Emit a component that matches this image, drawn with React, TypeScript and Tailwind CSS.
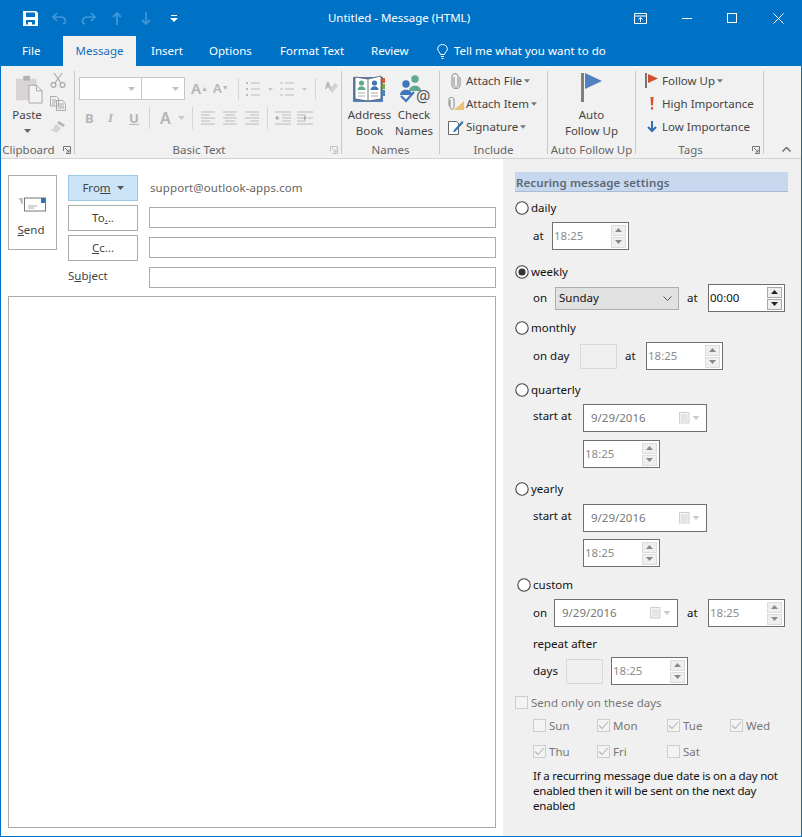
import React from 'react';

const Caret: React.FC<{ className?: string }> = ({ className = 'fill-[#6a6a6a]' }) => (
  <svg width="7" height="4" viewBox="0 0 7 4" className={className}><path d="M0 0h7L3.5 4z" /></svg>
);

const Radio: React.FC<{ checked?: boolean }> = ({ checked }) => (
  <svg width="14" height="14" viewBox="0 0 14 14" className="shrink-0">
    <circle cx="7" cy="7" r="6.2" fill="#fff" stroke="#444" strokeWidth="1.1" />
    {checked && <circle cx="7" cy="7" r="3.6" fill="#333" />}
  </svg>
);

const Check: React.FC<{ checked?: boolean }> = ({ checked }) => (
  <div className="w-[13px] h-[13px] border border-[#cdcdcd] bg-[#f3f3f3] shrink-0 flex items-center justify-center">
    {checked && (
      <svg width="11" height="11" viewBox="0 0 11 11" fill="none" stroke="#b4b4b4" strokeWidth="1.1"><path d="M1 5.5l3 3L10 2" /></svg>
    )}
  </div>
);

const Spinner: React.FC<{ value: string; active?: boolean }> = ({ value, active }) => (
  <div className="w-[77px] h-[28px] border border-[#707070] bg-white flex items-center shrink-0">
    <span className={active ? 'flex-1 pl-[1px] text-[#111]' : 'flex-1 pl-[1px] text-[#8c8c8c]'}>{value}</span>
    <div className="w-[15px] mr-[2px] flex flex-col gap-[1px]">
      {[0, 1].map((i) => (
        <div key={i} className={active ? 'h-[11px] border border-[#a8a8a8] bg-[#ececec] flex items-center justify-center' : 'h-[11px] border border-[#dcdcdc] bg-[#efefef] flex items-center justify-center'}>
          <svg width="7" height="4" viewBox="0 0 7 4" className={active ? 'fill-[#222]' : 'fill-[#8a8a8a]'}>
            <path d={i === 0 ? 'M0 4h7L3.5 0z' : 'M0 0h7L3.5 4z'} />
          </svg>
        </div>
      ))}
    </div>
  </div>
);

const DatePick: React.FC = () => (
  <div className="w-[124px] h-[28px] border border-[#707070] bg-white flex items-center shrink-0">
    <span className="flex-1 pl-[7px] text-[#777]">9/29/2016</span>
    <svg width="11" height="12" viewBox="0 0 11 12" className="mr-[2px]">
      <rect x="0.5" y="0.5" width="9.5" height="10.5" fill="#f4f4f4" stroke="#d0d0d0" />
      <path d="M2 3h7M2 5h7M2 7h7M2 9h7M3 3v6M5 3v6M7 3v6" stroke="#d8d8d8" strokeWidth="0.7" />
    </svg>
    <Caret className="fill-[#cbcbc4] mr-[6px] w-[8px]" />
  </div>
);

const Empty: React.FC = () => <div className="w-[37px] h-[25px] border border-[#d9d9d9] bg-[#f0f0f0] shrink-0" />;

const Group: React.FC<{ width: string; label: string; launcher?: boolean; dim?: boolean; children: React.ReactNode }> = ({ width, label, launcher, dim, children }) => (
  <div className={`${width} mt-[5px] h-[83px] border-r border-[#c8c8c8] flex flex-col shrink-0`}>
    <div className="flex-1 min-h-0">{children}</div>
    <div className={launcher ? 'relative h-[13px] mb-[-2px] pr-[18px] leading-[13px] text-center text-[#666] whitespace-nowrap' : 'relative h-[13px] mb-[-2px] leading-[13px] text-center text-[#666] whitespace-nowrap'}>
      {label}
      {launcher && (
        <svg width="8" height="8" viewBox="0 0 8 8" fill="none" className="absolute right-[3px] top-[3px]" stroke={dim ? '#c0c0c0' : '#777'}>
          <path d="M.5 5V.5H7.500V7.500H3M2 2l4 4M6 3.500V6H3.500" />
        </svg>
      )}
    </div>
  </div>
);

const ClipboardGroup: React.FC = () => (
  <Group width="w-[74px]" label="Clipboard" launcher>
    <div className="flex pl-[8px] pt-[1px]">
      <div className="w-[36px] flex flex-col items-center">
        <svg width="28" height="30" viewBox="0 0 30 30" className="mt-[2px] ml-[3px]">
          <path d="M1 4h7l1-3h6l1 3h7v23H1z" fill="#d8d4d4" />
          <rect x="9" y="1" width="7" height="5" fill="#b6b0b0" />
          <path d="M15 11h8l6 6v13H15z" fill="#f3f1f3" stroke="#a7a3a7" />
          <path d="M23 11v6h6" fill="none" stroke="#a7a3a7" />
        </svg>
        <span className="mt-[3px] leading-[16px] text-[#444]">Paste</span>
        <Caret className="fill-[#666] mt-[6px]" />
      </div>
      <div className="ml-[5px] flex flex-col items-center w-[16px]">
        <svg width="16" height="16" viewBox="0 0 16 16" fill="none" stroke="#aaa" strokeWidth="1.200">
          <circle cx="3.500" cy="13" r="2.400" /><circle cx="12.500" cy="13" r="2.400" />
          <path d="M5 11L12 1M11 11L4 1" />
        </svg>
        <svg width="16" height="15" viewBox="0 0 16 15" fill="none" stroke="#aaa" className="mt-[8px]">
          <path d="M.5.500h6l2 2V10H.5zM6.500 4.500h6l3 3v7h-9zM2 4h4M2 6h4M2 8h3M8 8h6M8 10h6M8 12h6" />
        </svg>
        <svg width="16" height="14" viewBox="0 0 16 14" className="mt-[9px]">
          <path d="M9 1l6 4-2 2-6-4z" fill="#b5b5b5" /><path d="M6 4l5 4-4 5-7-3 3-1z" fill="#d4d4d4" />
        </svg>
      </div>
    </div>
  </Group>
);

const Bars: React.FC<{ kind: 'l' | 'c' | 'r' | 'in' | 'out' }> = ({ kind }) => {
  const d: Record<string, string> = {
    l: 'M0 1h14M0 4h9M0 7h14M0 10h9M0 13h14',
    c: 'M0 1h14M2 4h10M0 7h14M2 10h10M0 13h14',
    r: 'M0 1h14M5 4h9M0 7h14M5 10h9M0 13h14',
    in: 'M0 1h16M7 4h9M7 7h9M7 10h9M0 13h16M0 7h5',
    out: 'M0 1h16M0 4h9M0 7h9M0 10h9M0 13h16M11 7h5',
  };
  const wide = kind === 'in' || kind === 'out';
  return (
    <svg width={wide ? 16 : 14} height="14" viewBox={wide ? '0 0 16 14' : '0 0 14 14'} fill="none" stroke="#bbb">
      <path d={d[kind]} />
      {kind === 'in' && <path d="M0 7l3-2.500v5z" fill="#aaa" stroke="none" />}
      {kind === 'out' && <path d="M16 7l-3-2.500v5z" fill="#aaa" stroke="none" transform="translate(-6)" />}
    </svg>
  );
};

const Sep: React.FC = () => <div className="w-px h-[22px] bg-[#d4d4d4] shrink-0" />;

const BasicTextGroup: React.FC = () => (
  <Group width="w-[267px]" label="Basic Text" launcher dim>
    <div className="flex flex-col text-[#b5b5b5]">
      <div className="flex items-center h-[23px] mt-[6px] pl-[4px]">
        <div className="w-[63px] h-[23px] border border-[#c6c6c6] bg-white flex items-center justify-end pr-[6px]"><Caret className="fill-[#c0c0c0]" /></div>
        <div className="w-[43px] h-[23px] border border-l-0 border-[#c6c6c6] bg-white flex items-center justify-end pr-[5px]"><Caret className="fill-[#c0c0c0]" /></div>
        <span className="ml-[6px] w-[22px] font-semibold text-[15px] leading-[15px]">A<sup className="text-[7px]">▲</sup></span>
        <span className="w-[20px] font-semibold text-[13px] leading-[15px]">A<sup className="text-[7px]">▼</sup></span>
        <div className="ml-[5px]"><Sep /></div>
        <svg width="27" height="14" viewBox="0 0 27 14" fill="none" stroke="#bbb" className="ml-[7px]">
          <path d="M5 1h9M5 7h9M5 13h9" /><path d="M0 1h2M0 7h2M0 13h2" strokeWidth="2" /><path d="M22 6h5l-2.500 3z" fill="#c8c8c8" stroke="none" />
        </svg>
        <svg width="27" height="14" viewBox="0 0 27 14" fill="none" stroke="#bbb" className="ml-[7px]">
          <path d="M5 1h9M5 7h9M5 13h9M0 1h3M0 7h3M0 13h3" /><path d="M22 6h5l-2.500 3z" fill="#c8c8c8" stroke="none" />
        </svg>
        <div className="ml-[8px]"><Sep /></div>
        <svg width="15" height="15" viewBox="0 0 15 15" className="ml-[9px]">
          <path d="M7 12l6-7-3-3-6 6z" fill="#d2d2d2" /><path d="M2 1h2l2 7H4.500L4 6.500H2L1.500 8H0z" fill="#b8b8b8" />
        </svg>
      </div>
      <div className="flex items-center h-[22px] mt-[7px] pl-[10px]">
        <span className="w-[23px] font-bold text-[13px]">B</span>
        <span className="w-[21px] italic font-bold text-[13px] font-['Liberation_Serif']">I</span>
        <span className="w-[20px] underline font-bold text-[13px]">U</span>
        <Sep />
        <span className="ml-[10px] w-[18px] font-semibold text-[16px]">A</span>
        <Caret className="fill-[#c8c8c8]" />
        <div className="ml-[7px]"><Sep /></div>
        <div className="ml-[8px] flex gap-[8px]"><Bars kind="l" /><Bars kind="c" /><Bars kind="r" /></div>
        <div className="ml-[8px]"><Sep /></div>
        <div className="ml-[7px] flex gap-[6px]"><Bars kind="in" /><Bars kind="out" /></div>
      </div>
    </div>
  </Group>
);

const NamesGroup: React.FC = () => (
  <Group width="w-[98px]" label="Names">
    <div className="flex pl-[4px] leading-[16px] text-[#444] text-center">
      <div className="w-[47px] flex flex-col items-center">
        <svg width="33" height="28" viewBox="0 0 33 28" className="mt-[4px]">
          <rect x="0" y="2" width="30" height="25" fill="#4e81bd" />
          <path d="M29 3h3v5h-3z" fill="#d5583a" /><path d="M29 9h3v5h-3z" fill="#7aa83f" /><path d="M29 15h3v6h-3z" fill="#4e81bd" />
          <path d="M2 2l13 2 13-3v23l-13 2-13-2z" fill="#fff" stroke="#555" strokeWidth="0.800" />
          <path d="M15 4v22" stroke="#777" />
          <circle cx="8.500" cy="8" r="2.600" fill="#5fa98e" /><path d="M4.500 15c0-5 8-5 8 0z" fill="#5fa98e" />
          <circle cx="21.500" cy="8" r="2.600" fill="#3f76b8" /><path d="M17.500 15c0-5 8-5 8 0z" fill="#3f76b8" />
          <path d="M5 18h7M5 21h7M18 18h7M18 21h7" stroke="#aaa" />
        </svg>
        <span className="mt-[4px]">Address</span>
        <span>Book</span>
      </div>
      <div className="w-[42px] flex flex-col items-center whitespace-nowrap">
        <div className="relative w-[31px] h-[30px] mt-[3px]">
          <svg width="31" height="30" viewBox="0 0 31 30">
            <circle cx="16" cy="5" r="3.700" fill="#5fa98e" /><path d="M10 17c0-7 12-7 12 0z" fill="#5fa98e" />
            <circle cx="7" cy="10" r="3.700" fill="#3f76b8" /><path d="M1 21c0-7 12-7 12 0z" fill="#3f76b8" />
            <path d="M2 22l5 5 8-9" fill="none" stroke="#3f76b8" strokeWidth="2.200" />
          </svg>
          <span className="absolute right-[-1px] bottom-[-2px] text-[16px] leading-[20px] text-[#555]">@</span>
        </div>
        <span className="mt-[3px]">Check</span>
        <span>Names</span>
      </div>
    </div>
  </Group>
);

const MiniAction: React.FC<{ icon: React.ReactNode; label: string; caret?: boolean }> = ({ icon, label, caret }) => (
  <div className="h-[23px] flex items-center text-[#444] whitespace-nowrap">
    <div className="w-[17px] flex justify-center shrink-0">{icon}</div>
    <span className="ml-[2px]">{label}</span>
    {caret && <Caret className="fill-[#777] ml-[2px] w-[6px]" />}
  </div>
);

const Clip = () => (
  <svg width="10" height="16" viewBox="0 0 10 16" fill="none" stroke="#888"><path d="M3 4v8c0 3 4 3 4 0V3C7 0 1 0 1 3v9c0 5 8 5 8 0V4" /></svg>
);

const IncludeGroup: React.FC = () => (
  <Group width="w-[108px]" label="Include">
    <div className="pl-[7px] flex flex-col mt-[-2px]">
      <MiniAction icon={<Clip />} label="Attach File" caret />
      <MiniAction
        icon={
          <svg width="16" height="14" viewBox="0 0 16 14" fill="none">
            <path d="M4 13h12V3l-6 6z" fill="#eac27a" /><path d="M5 13L16 3" stroke="#fff" /><path d="M2 3v7c0 3 4 3 4 0V2C6 0 1 0 1 2v7" stroke="#888" />
          </svg>
        }
        label="Attach Item"
        caret
      />
      <MiniAction
        icon={
          <svg width="16" height="16" viewBox="0 0 16 16" fill="none">
            <path d="M.5 2.500h8l2 2v11H.5z" fill="#fff" stroke="#666" /><path d="M6 11l8-9 1.500 1.500-8 9L5 13.500z" fill="#2f73b5" />
          </svg>
        }
        label="Signature"
        caret
      />
    </div>
  </Group>
);

const AutoGroup: React.FC = () => (
  <Group width="w-[88px]" label="Auto Follow Up">
    <div className="flex flex-col items-center leading-[16px] text-[#444]">
      <svg width="21" height="30" viewBox="0 0 21 30" className="mt-[2px]">
        <rect x="0" y="0" width="3" height="29" fill="#7f7f7f" />
        <path d="M4 0l17 8-17 8z" fill="#4e81bd" />
      </svg>
      <span className="mt-[4px]">Auto</span>
      <span>Follow Up</span>
    </div>
  </Group>
);

const TagsGroup: React.FC = () => (
  <Group width="w-[128px]" label="Tags" launcher>
    <div className="pl-[7px] flex flex-col mt-[-2px]">
      <MiniAction
        icon={<svg width="13" height="15" viewBox="0 0 13 15"><rect width="2" height="15" fill="#777" /><path d="M3 1l10 4.500L3 10z" fill="#d0502e" /></svg>}
        label="Follow Up"
        caret
      />
      <MiniAction
        icon={<svg width="4" height="13" viewBox="0 0 4 13" fill="#d9512c"><path d="M.5 0h3L3 8.500H1z" /><rect x="1" y="10" width="2" height="2.500" /></svg>}
        label="High Importance"
      />
      <MiniAction
        icon={<svg width="10" height="12" viewBox="0 0 10 12" fill="none" stroke="#2f6eb5" strokeWidth="2"><path d="M5 0v10M1 6l4 4 4-4" /></svg>}
        label="Low Importance"
      />
    </div>
  </Group>
);

const Header: React.FC = () => (
  <div className="bg-[#0072c6] text-white">
    <div className="h-[35px] pb-[1px] flex items-center relative">
      <svg width="15" height="15" viewBox="0 0 15 15" className="ml-[22px]" fill="#fff">
        <path fillRule="evenodd" d="M0 0h13l2 2v13H0zM3 1.500v4.500h9V1.500zM3 9v4.500h2V11h4v2.500h3V9z" />
      </svg>
      <svg width="15" height="13" viewBox="0 0 15 13" fill="none" stroke="#3f96d8" strokeWidth="1.600" className="ml-[14px]">
        <path d="M5 1L1 5l4 4M1 5h8c5 0 6 6 2 7" />
      </svg>
      <svg width="15" height="13" viewBox="0 0 15 13" fill="none" stroke="#3f96d8" strokeWidth="1.600" className="ml-[14px]">
        <path d="M10 1l4 4-4 4M14 5H6c-5 0-6 6-2 7" />
      </svg>
      <svg width="10" height="13" viewBox="0 0 10 13" fill="none" stroke="#3f96d8" strokeWidth="1.800" className="ml-[16px]">
        <path d="M5 13V1M1 5l4-4 4 4" />
      </svg>
      <svg width="10" height="13" viewBox="0 0 10 13" fill="none" stroke="#3f96d8" strokeWidth="1.800" className="ml-[19px]">
        <path d="M5 0v12M1 8l4 4 4-4" />
      </svg>
      <svg width="8" height="7" viewBox="0 0 8 7" fill="#fff" className="ml-[19px]"><path d="M1 0h6v1H1zM0 3h8L4 7z" /></svg>
      <span className="absolute left-0 right-[4px] text-center pointer-events-none">Untitled - Message (HTML)</span>
      <svg width="13" height="11" viewBox="0 0 13 11" fill="none" stroke="#fff" className="ml-[456px]">
        <path d="M.5.500h12v10H.5zM.5 3h12M6.500 9V4.500M4.500 6.500l2-2 2 2" />
      </svg>
      <div className="ml-[35px] w-[10px] h-px bg-white" />
      <div className="ml-[35px] w-[10px] h-[10px] border border-white" />
      <svg width="11" height="11" viewBox="0 0 11 11" stroke="#fff" className="ml-[36px]"><path d="M.5.500l10 10M10.500.500l-10 10" /></svg>
    </div>
    <div className="h-[30px] flex items-stretch leading-[30px] pl-[21px] whitespace-nowrap">
      <span className="w-[41px]">File</span>
      <span className="w-[73px] bg-[#f1f1f1] text-[#106ebe] text-center">Message</span>
      <span className="ml-[15px] w-[58px]">Insert</span>
      <span className="w-[71px]">Options</span>
      <span className="w-[91px]">Format Text</span>
      <span className="w-[66px]">Review</span>
      <svg width="11" height="15" viewBox="0 0 11 15" fill="none" stroke="#fff" className="self-center">
        <path d="M3.500 10.500C3 8 .7 7.500.7 4.800a4.800 4.300 0 0 1 9.600 0C10.300 7.500 8 8 7.500 10.500zM4 12.500h3M4.500 14.500h2" />
      </svg>
      <span className="ml-[6px]">Tell me what you want to do</span>
    </div>
  </div>
);

const Ribbon: React.FC = () => (
  <div className="h-[93px] bg-[#f1f1f1] border-b border-[#d2d2d2] flex items-start relative">
    <ClipboardGroup />
    <BasicTextGroup />
    <NamesGroup />
    <IncludeGroup />
    <AutoGroup />
    <TagsGroup />
    <svg width="9" height="5" viewBox="0 0 9 5" fill="none" stroke="#666" strokeWidth="1.400" className="absolute right-[10px] bottom-[6px]"><path d="M.5 4.500l4-4 4 4" /></svg>
  </div>
);

const AddressBtn: React.FC<{ children: React.ReactNode }> = ({ children }) => (
  <div className="h-[26px] border border-[#ababab] bg-white flex items-center justify-center text-[#444]">{children}</div>
);

const Compose: React.FC = () => (
  <div className="w-[502px] bg-white pl-[7px] pt-[16px] shrink-0 text-[#444]">
    <div className="flex items-start">
      <div className="w-[49px] h-[75px] border border-[#ababab] flex flex-col items-center">
        <svg width="27" height="15" viewBox="0 0 27 15" fill="none" className="mt-[21px]">
          <rect x="5.500" y="1" width="21" height="13" fill="#fff" stroke="#777" />
          <rect x="22" y="1" width="4" height="5" fill="#2f73b5" />
          <path d="M9 9h9M9 11h6" stroke="#aaa" /><path d="M0 2h4M1 4h3M2 6h2" stroke="#888" />
        </svg>
        <span className="mt-[10px] pr-[3px]"><u>S</u>end</span>
      </div>
      <div className="ml-[11px] w-[70px] flex flex-col gap-[4px]">
        <div className="h-[26px] border border-[#9cc8e6] bg-[#cce4f7] flex items-center justify-center">
          <span>Fro<u>m</u></span>
          <Caret className="fill-[#555] ml-[6px] w-[7px]" />
        </div>
        <AddressBtn>To<u>.</u>..</AddressBtn>
        <AddressBtn><u>C</u>c...</AddressBtn>
        <span className="mt-[3px] leading-[16px]">S<u>u</u>bject</span>
      </div>
      <div className="ml-[11px] w-[347px] flex flex-col gap-[9px]">
        <div className="h-[23px] pl-[1px] pt-[2px] flex items-center text-[#666] tracking-[0.1px]">support@outlook-apps.com</div>
        <div className="h-[21px] border border-[#ababab]" />
        <div className="h-[21px] border border-[#ababab]" />
        <div className="h-[21px] border border-[#ababab]" />
      </div>
    </div>
    <div className="mt-[8px] w-[488px] h-[532px] border border-[#ababab]" />
  </div>
);

const Choice: React.FC<{ label: string; checked?: boolean }> = ({ label, checked }) => (
  <div className="h-[14px] flex items-center gap-[2px]">
    <Radio checked={checked} />
    <span className="text-[#111]">{label}</span>
  </div>
);

const Day: React.FC<{ label: string; checked?: boolean; width: string }> = ({ label, checked, width }) => (
  <div className={`${width} h-[13px] flex items-center gap-[3px] text-[#777]`}>
    <Check checked={checked} />
    <span>{label}</span>
  </div>
);

const Settings: React.FC = () => (
  <div className="flex-1 bg-[#f0f0f0] pl-[12px] text-[#111] whitespace-nowrap">
    <div className="mt-[13px] w-[273px] h-[20px] bg-[#c7d8ee] border-b border-[#a9bcd6] pl-[1px] pt-[1px] font-semibold text-[#5d6875] leading-[20px] tracking-[0.1px]">Recuring message settings</div>

    <div className="mt-[9px]"><Choice label="daily" /></div>
    <div className="mt-[7px] pl-[18px] flex items-center">
      <span className="w-[19px]">at</span>
      <Spinner value="18:25" />
    </div>

    <div className="mt-[15px]"><Choice label="weekly" checked /></div>
    <div className="mt-[5px] pl-[18px] flex items-center">
      <span className="w-[22px]">on</span>
      <div className="w-[124px] h-[23px] border border-[#adadad] bg-[#e1e1e1] flex items-center justify-between pl-[3px] pr-[6px]">
        <span>Sunday</span>
        <svg width="9" height="5" viewBox="0 0 9 5" fill="none" stroke="#555"><path d="M.5.500l4 4 4-4" /></svg>
      </div>
      <span className="ml-[8px] w-[21px]">at</span>
      <Spinner value="00:00" active />
    </div>

    <div className="mt-[9px]"><Choice label="monthly" /></div>
    <div className="mt-[7px] pl-[18px] flex items-center">
      <span className="w-[47px]">on day</span>
      <Empty />
      <span className="ml-[8px] w-[21px]">at</span>
      <Spinner value="18:25" />
    </div>

    <div className="mt-[13px]"><Choice label="quarterly" /></div>
    <div className="mt-[7px] pl-[18px] flex items-start">
      <span className="w-[50px] leading-[24px]">start at</span>
      <DatePick />
    </div>
    <div className="mt-[8px] pl-[68px]"><Spinner value="18:25" /></div>

    <div className="mt-[14px]"><Choice label="yearly" /></div>
    <div className="mt-[8px] pl-[18px] flex items-start">
      <span className="w-[50px] leading-[24px]">start at</span>
      <DatePick />
    </div>
    <div className="mt-[7px] pl-[68px]"><Spinner value="18:25" /></div>

    <div className="mt-[11px] pl-[2px]"><Choice label="custom" /></div>
    <div className="mt-[7px] pl-[18px] flex items-center">
      <span className="w-[21px]">on</span>
      <DatePick />
      <span className="ml-[9px] w-[21px]">at</span>
      <Spinner value="18:25" />
    </div>
    <div className="mt-[9px] pl-[18px] h-[15px] leading-[15px]">repeat after</div>
    <div className="mt-[6px] pl-[18px] flex items-center">
      <span className="w-[33px]">days</span>
      <Empty />
      <div className="ml-[8px]"><Spinner value="18:25" /></div>
    </div>

    <div className="mt-[11px] h-[13px] flex items-center gap-[3px] text-[#777]">
      <Check />
      <span>Send only on these days</span>
    </div>
    <div className="mt-[10px] pl-[18px] flex">
      <Day label="Sun" width="w-[64px]" />
      <Day label="Mon" checked width="w-[70px]" />
      <Day label="Tue" checked width="w-[63px]" />
      <Day label="Wed" checked width="w-[60px]" />
    </div>
    <div className="mt-[13px] pl-[18px] flex">
      <Day label="Thu" checked width="w-[64px]" />
      <Day label="Fri" checked width="w-[70px]" />
      <Day label="Sat" width="w-[63px]" />
    </div>
    <p className="mt-[10px] pl-[18px] leading-[15px] w-[273px] whitespace-normal tracking-[-0.2px]">If a recurring message due date is on a day not enabled then it will be sent on the next day enabled</p>
  </div>
);

export default function App() {
  return (
    <div className="w-[802px] h-[837px] border border-[#0072c6] flex flex-col overflow-hidden font-['Noto_Sans',sans-serif] text-[11.5px] leading-[16px]">
      <Header />
      <Ribbon />
      <div className="flex flex-1 min-h-0">
        <Compose />
        <Settings />
      </div>
    </div>
  );
}
